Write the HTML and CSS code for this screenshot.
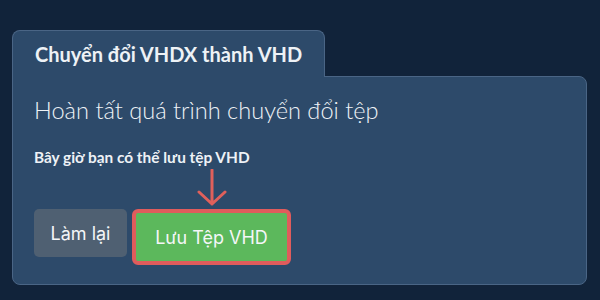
FILE: index.html
```html
<!DOCTYPE html>
<html lang="vi">
<head>
  <meta charset="UTF-8" />
  <meta name="viewport" content="width=device-width, initial-scale=1.0"/>
  <title>Chuyển đổi VHDX thành VHD</title>
  <link rel="stylesheet" href="styles.css">
</head>
<body>
  <div class="converter">
    <div class="tab">Chuyển đổi VHDX thành VHD</div>
    <div class="panel">
      <h2 class="done-title">Hoàn tất quá trình chuyển đổi tệp</h2>
      <p class="done-note">Bây giờ bạn có thể lưu tệp VHD</p>
      <div class="actions">
        <button class="btn btn-reset">Làm lại</button>
        <div class="save-wrap">
          <svg class="hint-arrow" width="30" height="38" viewBox="0 0 30 38">
            <path d="M15 1 V35 M2 23 L15 35 L28 23" fill="none" stroke="#e0605b" stroke-width="3" stroke-linecap="round" stroke-linejoin="round"/>
          </svg>
          <button class="btn btn-save">Lưu Tệp VHD</button>
        </div>
      </div>
    </div>
  </div>
</body>
</html>
```

FILE: styles.css
```css
body {
  margin: 0;
  background-color: #11233a;
  font-family: 'Lato', 'Noto Sans', sans-serif;
  color: #eef2f6;
}
.converter {
  padding: 30px 13px 0 12px;
}
.tab {
  display: inline-block;
  position: relative;
  z-index: 1;
  margin-bottom: -1px;
  padding: 12px 22px 11px 22px;
  font-size: 20px;
  line-height: 23px;
  font-weight: 700;
  background-color: #2d4a6a;
  border: 1px solid #4a6585;
  border-bottom: none;
  border-radius: 8px 8px 0 0;
}
.panel {
  background-color: #2d4a6a;
  border: 1px solid #4a6585;
  border-radius: 0 8px 8px 8px;
  padding: 19px 20px 19px 21px;
}
.done-title {
  margin: 0;
  font-size: 23.6px;
  line-height: 29px;
  font-weight: 300;
}
.done-note {
  margin: 23px 0 0 0;
  font-size: 15.4px;
  line-height: 18px;
  font-weight: 700;
}
.actions {
  display: flex;
  align-items: flex-start;
  gap: 5px;
  margin-top: 43px;
}
.btn {
  font-family: 'Inter', 'Liberation Sans', sans-serif;
  font-size: 18px;
  color: #f4f6f8;
  border: none;
  cursor: pointer;
}
.btn-reset {
  width: 93px;
  height: 48px;
  background-color: #4f6072;
  border-radius: 5px;
}
.save-wrap {
  position: relative;
}
.hint-arrow {
  position: absolute;
  bottom: 100%;
  left: 50%;
  margin-bottom: 2px;
  transform: translateX(-50%);
}
.btn-save {
  width: 159px;
  height: 56px;
  background-color: #5cb85c;
  border: 4px solid #e05c5c;
  border-radius: 6px;
}
```
